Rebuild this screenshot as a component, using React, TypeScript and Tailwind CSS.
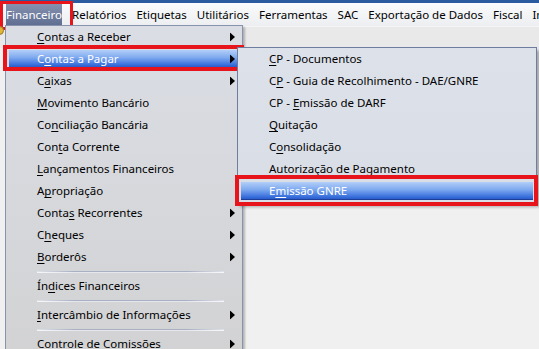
import React from "react";

const U = ({ t, i }: { t: string; i: number }) => (
  <>
    {t.slice(0, i)}
    <span className="underline underline-offset-2">{t[i]}</span>
    {t.slice(i + 1)}
  </>
);

const Arrow = () => (
  <svg width="5" height="9" viewBox="0 0 5 9" className="absolute right-[7px] top-1/2 -translate-y-1/2">
    <path d="M0 0 L5 4.5 L0 9 Z" fill="#000" />
  </svg>
);

type Item = { t: string; i: number; sub?: boolean; sel?: boolean; sep?: boolean };

const mainItems: Item[] = [
  { t: "Contas a Receber", i: 0, sub: true },
  { t: "Contas a Pagar", i: 1, sub: true, sel: true },
  { t: "Caixas", i: 1, sub: true },
  { t: "Movimento Bancário", i: 0 },
  { t: "Conciliação Bancária", i: 2 },
  { t: "Conta Corrente", i: 3 },
  { t: "Lançamentos Financeiros", i: 0 },
  { t: "Apropriação", i: 1 },
  { t: "Contas Recorrentes", i: 5, sub: true },
  { t: "Cheques", i: 1, sub: true },
  { t: "Borderôs", i: 0, sub: true, sep: true },
  { t: "Índices Financeiros", i: 2, sep: true },
  { t: "Intercâmbio de Informações", i: 0, sub: true, sep: true },
  { t: "Controle de Comissões", i: 4, sub: true },
];

const subItems: Item[] = [
  { t: "CP - Documentos", i: 0 },
  { t: "CP - Guia de Recolhimento - DAE/GNRE", i: 1 },
  { t: "CP - Emissão de DARF", i: 5 },
  { t: "Quitação", i: 0 },
  { t: "Consolidação", i: 1 },
  { t: "Autorização de Pagamento", i: 0 },
  { t: "Emissão GNRE", i: 1, sel: true },
];

const Sep = () => (
  <div className="h-[7px] flex items-center pl-[31px] pr-[18px]">
    <div className="h-[2px] w-full bg-[linear-gradient(to_right,#dfe2e8,#a9b0c4_20%,#a9b0c4_80%,#dfe2e8)] border-b border-white/70" />
  </div>
);

const Row = ({ it }: { it: Item }) => (
  <div className="relative h-[22px] flex items-center pl-[31px]">
    {it.sel && (
      <div className="absolute inset-x-[3px] top-[2px] bottom-[2px] bg-[linear-gradient(to_bottom,#b2cef8,#7ea9ef_45%,#3c72dd_85%,#2a5cc9)] border-b border-[#1d3f9a]" />
    )}
    <span className={`relative ${it.sel ? "text-white" : "text-black"}`}>
      <U t={it.t} i={it.i} />
    </span>
    {it.sub && <Arrow />}
  </div>
);

export default function App() {
  const top = ["Relatórios", "Etiquetas", "Utilitários", "Ferramentas", "SAC", "Exportação de Dados", "Fiscal", "Integração"];
  return (
    <div
      className="relative w-[539px] h-[349px] overflow-hidden bg-[#f0f0f0] text-[11.5px]"
      style={{ fontFamily: '"Noto Sans", "Open Sans", sans-serif' }}
    >
      <div className="h-[3px] bg-[#2a5aa0]" />
      <div className="h-[24px] bg-[linear-gradient(to_bottom,#fafbfc,#eceef1)] flex items-end pb-[1px] gap-[10px] pl-[6px] border-b border-[#f6f6f6] whitespace-nowrap">
        <div className="h-[21px] w-[63px] flex items-center justify-center text-white bg-[linear-gradient(to_bottom,#8591ae,#5f6e92)]">
          Financeiro
        </div>
        {top.map((t) => (
          <span key={t} className="h-[21px] flex items-center text-black">
            {t}
          </span>
        ))}
      </div>
      <div className="h-[21px] bg-[#e9e9e9]" />

      {/* Red frame around Financeiro */}
      <div className="absolute left-[0px] top-[1px] w-[73px] h-[29px] border-[3px] border-[#e8141b]" />

      {/* left partial icon */}
      <div className="absolute left-[-5px] top-[26px] w-[9px] h-[9px] rounded-full bg-[#e2b437] border border-[#9a7a20]" />

      {/* Main menu */}
      <div className="absolute left-[5px] top-[25px] w-[238px] h-[340px] border border-[#8792ac] bg-[linear-gradient(to_bottom,#dadde4,#d6d8dc_50%,#d2d2d3)] shadow-[2px_2px_2px_rgba(0,0,0,0.25)]">
        {mainItems.map((it) => (
          <React.Fragment key={it.t}>
            <Row it={it} />
            {it.sep && <Sep />}
          </React.Fragment>
        ))}
      </div>

      {/* Red frame around Contas a Pagar */}
      <div className="absolute left-[3px] top-[45px] w-[241px] h-[26px] border-[4px] border-[#e8141b]" />

      {/* Submenu */}
      <div className="absolute left-[237px] top-[47px] w-[300px] h-[157px] border border-[#6f7da0] bg-[linear-gradient(to_bottom,#dde1e9,#d9dde5)] shadow-[3px_3px_3px_rgba(0,0,0,0.3)]">
        {subItems.map((it) => (
          <Row key={it.t} it={it} />
        ))}
      </div>

      {/* Red frame around Emissão GNRE */}
      <div className="absolute left-[235px] top-[175px] w-[303px] h-[31px] border-[4px] border-[#e8141b]" />
    </div>
  );
}
